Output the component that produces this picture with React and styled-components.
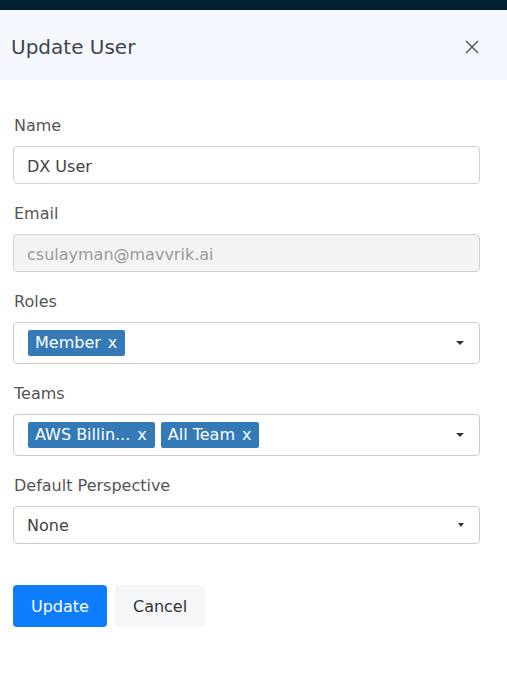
import React from "react";
import styled, { createGlobalStyle } from "styled-components";

const Global = createGlobalStyle`
  html, body { margin: 0; padding: 0; background: #fff; }
  body { font-family: "DejaVu Sans", "Liberation Sans", sans-serif; }
  * { box-sizing: border-box; }
`;

const Page = styled.div`
  width: 507px;
  height: 676px;
  background: #fff;
`;

const TopBar = styled.div`
  height: 10px;
  background: #021e31;
`;

const Header = styled.div`
  height: 70px;
  background: #f5f9ff;
  display: flex;
  align-items: center;
  justify-content: space-between;
  padding: 4px 28px 0 11px;
`;

const Title = styled.h1`
  margin: 0;
  font-size: 20px;
  font-weight: 400;
  color: #3e4450;
  line-height: 24px;
`;

const Close = styled.button`
  border: 0;
  background: none;
  padding: 0;
  width: 14px;
  height: 14px;
  display: flex;
  cursor: pointer;
`;

const Body = styled.div`
  padding: 34px 27px 0 13px;
  display: flex;
  flex-direction: column;
  gap: 18px;
`;

const Field = styled.div`
  display: flex;
  flex-direction: column;
`;

const Label = styled.label`
  font-size: 16px;
  line-height: 22px;
  color: #555;
  padding: 1px 0 0 1px;
  margin-bottom: 9px;
`;

const Input = styled.div`
  height: 38px;
  border: 1px solid #cfd3d8;
  border-radius: 4px;
  background: ${(p) => (p.disabled ? "#f2f3f5" : "#fff")};
  color: ${(p) => (p.disabled ? "#9a9a9a" : "#444")};
  font-size: 16px;
  display: flex;
  align-items: center;
  padding: 3px 13px 0;
`;

const Select = styled.div`
  height: ${(p) => (p.multi ? 42 : 38)}px;
  border: 1px solid #cccccc;
  border-radius: 4px;
  background: #fff;
  display: flex;
  align-items: center;
  padding: 0 15px 0 14px;
  gap: 6px;
  color: #444;
  font-size: 16px;
`;

const Chip = styled.span`
  height: 26px;
  background: #337ab7;
  color: #fff;
  border-radius: 2px;
  display: inline-flex;
  align-items: center;
  gap: 7px;
  padding: 0 8px 1px 7px;
  font-size: 16px;
  white-space: nowrap;
`;

const Value = styled.span`
  flex: 1;
  margin-left: -1px;
`;

const Spacer = styled.span`
  flex: 1;
`;

const Caret = styled.span`
  width: 0;
  height: 0;
  border-left: ${(p) => p.w}px solid transparent;
  border-right: ${(p) => p.w}px solid transparent;
  border-top: ${(p) => p.h}px solid #333;
`;

const Actions = styled.div`
  display: flex;
  gap: 8px;
  margin-top: 23px;
`;

const Button = styled.button`
  height: 42px;
  border: 0;
  border-radius: 4px;
  font-family: inherit;
  font-size: 16px;
  padding: 0 18px;
  background: ${(p) => (p.primary ? "#0d7cfd" : "#f5f6f8")};
  color: ${(p) => (p.primary ? "#fff" : "#333")};
  cursor: pointer;
`;

export default function App() {
  return (
    <Page>
      <Global />
      <TopBar />
      <Header>
        <Title>Update User</Title>
        <Close aria-label="close">
          <svg width="14" height="14" viewBox="0 0 14 14">
            <path d="M1 1L13 13M13 1L1 13" stroke="#4a4f57" strokeWidth="1.4" />
          </svg>
        </Close>
      </Header>
      <Body>
        <Field>
          <Label>Name</Label>
          <Input>DX User</Input>
        </Field>
        <Field>
          <Label>Email</Label>
          <Input disabled>csulayman@mavvrik.ai</Input>
        </Field>
        <Field>
          <Label>Roles</Label>
          <Select multi>
            <Chip>Member<span>x</span></Chip>
            <Spacer />
            <Caret w={4} h={4} />
          </Select>
        </Field>
        <Field>
          <Label>Teams</Label>
          <Select multi>
            <Chip>AWS Billin...<span>x</span></Chip>
            <Chip>All Team<span>x</span></Chip>
            <Spacer />
            <Caret w={4} h={4} />
          </Select>
        </Field>
        <Field>
          <Label>Default Perspective</Label>
          <Select>
            <Value>None</Value>
            <Caret w={3.5} h={4} />
          </Select>
        </Field>
        <Actions>
          <Button primary>Update</Button>
          <Button>Cancel</Button>
        </Actions>
      </Body>
    </Page>
  );
}
